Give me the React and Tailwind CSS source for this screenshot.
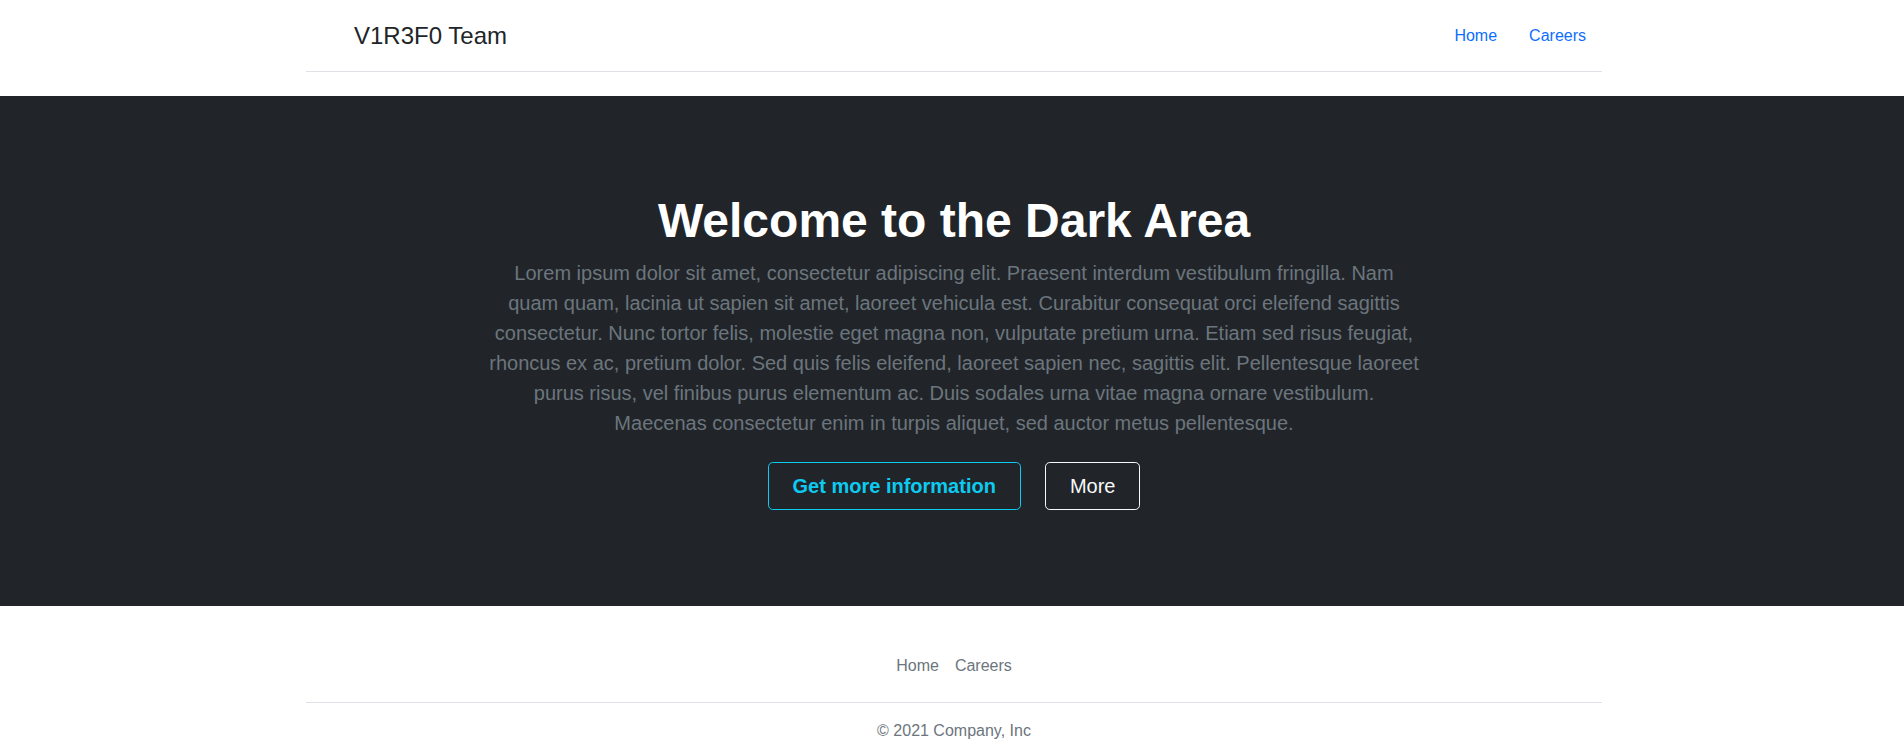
const paragraph =
  "Lorem ipsum dolor sit amet, consectetur adipiscing elit. Praesent interdum vestibulum fringilla. Nam quam quam, lacinia ut sapien sit amet, laoreet vehicula est. Curabitur consequat orci eleifend sagittis consectetur. Nunc tortor felis, molestie eget magna non, vulputate pretium urna. Etiam sed risus feugiat, rhoncus ex ac, pretium dolor. Sed quis felis eleifend, laoreet sapien nec, sagittis elit. Pellentesque laoreet purus risus, vel finibus purus elementum ac. Duis sodales urna vitae magna ornare vestibulum. Maecenas consectetur enim in turpis aliquet, sed auctor metus pellentesque.";

function Header() {
    return (
        <div className="ml-[calc(50%-658px)] w-[1320px] px-3">
            <header className="flex h-[72px] items-center border-b border-[#dee2e6]">
                <a href="#" className="mr-auto flex items-center text-[#212529] no-underline">
                    {/* empty logo slot, same as the reference */}
                    <svg className="mr-2" width="40" height="32" />
                    <span className="text-[24px] leading-[1.5]">V1R3F0 Team</span>
                </a>
                <ul className="flex">
                    <li>
                        <a href="#" className="block px-4 py-2 text-base leading-6 text-[#0d6efd]">Home</a>
                    </li>
                    <li>
                        <a href="#" className="block px-4 py-2 text-base leading-6 text-[#0d6efd]">Careers</a>
                    </li>
                </ul>
            </header>
        </div>
    );
}

function Hero() {
    return (
        <div className="mt-6 bg-[#212529] py-12 pl-[28px] pr-6 text-center text-[#6c757d]">
            <div className="py-12">
                <h1 className="mb-2 text-[48px] font-bold leading-[1.2] text-white">Welcome to the Dark Area</h1>
                <div className="mx-auto w-[934px]">
                    <p className="mb-6 text-[20px] leading-[1.5]">{paragraph}</p>
                    <div className="flex justify-center gap-2">
                        <button
                            type="button"
                            className="mr-4 rounded-[4.8px] border border-[#0dcaf0] px-6 py-2 text-[20px] font-bold leading-[1.5] text-[#0dcaf0]"
                        >
                            Get more information
                        </button>
                        <button
                            type="button"
                            className="rounded-[4.8px] border border-[#f8f9fa] px-6 py-2 text-[20px] leading-[1.5] text-[#f8f9fa]"
                        >
                            More
                        </button>
                    </div>
                </div>
            </div>
        </div>
    );
}

function Footer() {
    return (
        <div className="ml-[calc(50%-658px)] w-[1320px] px-3">
            <footer className="mt-6 pt-4">
                <ul className="mb-4 flex justify-center border-b border-[#dee2e6] pb-4">
                    <li><a href="#" className="block px-2 py-2 text-base leading-6 text-[#6c757d]">Home</a></li>
                    <li><a href="#" className="block px-2 py-2 text-base leading-6 text-[#6c757d]">Careers</a></li>
                </ul>
                <p className="text-center text-base leading-6 text-[#6c757d]">© 2021 Company, Inc</p>
            </footer>
        </div>
    );
}

export default function App() {
    return (
        <div className="bg-white font-['Liberation_Sans',Arial,sans-serif] text-[#212529]">
            <Header/>
            <Hero/>
            <Footer/>
        </div>
    );
}
